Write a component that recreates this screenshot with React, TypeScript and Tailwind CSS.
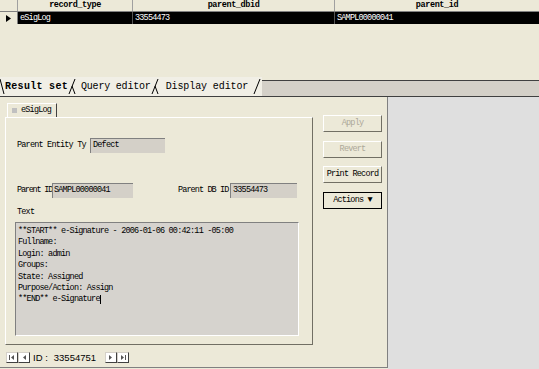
import React from 'react';

const body = "font-['Liberation_Mono',monospace] text-[8.5px] tracking-[-0.8px]";

function TabEdge({ last }: { last?: boolean }) {
  return (
    <svg width="9" height="15" viewBox="0 0 9 15" className="shrink-0">
      <line x1="1" y1="15" x2="7" y2="0" stroke="#000" strokeWidth="1" />
      {!last && <line x1="4" y1="7" x2="7" y2="15" stroke="#000" strokeWidth="1" />}
    </svg>
  );
}

function WinButton({ label, disabled, isDefault, mt }: { label: string; disabled?: boolean; isDefault?: boolean; mt: string }) {
  return (
    <div
      className={`${mt} h-[17px] w-[59px] flex items-center justify-center bg-[#ece9d8] border ${
        isDefault ? 'border-black' : 'border-t-white border-l-white border-r-[#716f64] border-b-[#716f64]'
      } ${disabled ? 'text-[#aca899]' : 'text-black'} ${body}`}
    >
      {label}
    </div>
  );
}

function NavBtn({ dir, end }: { dir: 'l' | 'r'; end?: boolean }) {
  return (
    <div className="w-[12px] h-[11px] bg-white border-r border-b border-r-[#404040] border-b-[#404040] border-t border-l border-t-[#d4d0c8] border-l-[#d4d0c8] flex items-center justify-center">
      <svg width="8" height="7" viewBox="0 0 8 7">
        {dir === 'l' ? (
          <>
            {end && <rect x="1" y="1" width="1" height="5" fill="#555" />}
            <polygon points="6,1 6,6 3,3.5" fill="#555" />
          </>
        ) : (
          <>
            <polygon points="2,1 2,6 5,3.5" fill="#555" />
            {end && <rect x="6" y="1" width="1" height="5" fill="#555" />}
          </>
        )}
      </svg>
    </div>
  );
}

export default function App() {
  const lines = [
    '**START** e-Signature - 2006-01-06 00:42:11 -05:00',
    'Fullname:',
    'Login: admin',
    'Groups:',
    'State: Assigned',
    'Purpose/Action: Assign',
  ];

  return (
    <div className="w-[539px] h-[369px] overflow-hidden bg-[#ece9d8] text-black">
      {/* result grid */}
      <div className={`grid grid-cols-[18px_115px_202px_204px] h-[12px] border-b border-[#808080] font-bold leading-[11px] font-['Liberation_Mono',monospace] text-[8.5px] tracking-[-0.4px]`}>
        <div className="border-r border-[#a0a0a0]" />
        <div className="text-center border-r border-[#a0a0a0]">record_type</div>
        <div className="text-center border-r border-[#a0a0a0]">parent_dbid</div>
        <div className="text-center">parent_id</div>
      </div>
      <div className={`grid grid-cols-[18px_115px_202px_204px] h-[12px] bg-black text-white leading-[12px] ${body}`}>
        <div className="bg-[#ece9d8] border-r border-[#808080] flex items-center pl-[6px]">
          <svg width="5" height="7" viewBox="0 0 5 7">
            <polygon points="0,0 5,3.5 0,7" fill="#000" />
          </svg>
        </div>
        <div className="pl-[2px] border-r border-[#555]">eSigLog</div>
        <div className="pl-[2px] border-r border-[#555]">33554473</div>
        <div className="pl-[2px]">SAMPL00000041</div>
      </div>

      <div className="h-[53px]" />

      {/* editor tabs */}
      <div className="flex h-[19px] font-['Liberation_Mono',monospace] text-[10px] leading-[15px]">
        <div className="flex items-start pt-[2px] bg-[#f1efe6]">
          <svg width="5" height="15" viewBox="0 0 5 15" className="shrink-0">
            <line x1="0" y1="0" x2="4" y2="15" stroke="#000" strokeWidth="1" />
          </svg>
          <span className="font-bold tracking-[0.3px]">Result set</span>
          <TabEdge />
          <span className="ml-[4px] tracking-[-0.2px]">Query editor</span>
          <TabEdge />
          <span className="ml-[6px] tracking-[-0.1px]">Display editor</span>
          <span className="w-[5px]" />
          <TabEdge last />
        </div>
        <div className="flex-1 mt-[3px] border-t border-[#404040] bg-[#d4d0c8]" />
      </div>
      <div className="h-px bg-[#404040]" />

      {/* main area */}
      <div className="flex h-[272px]">
        <div className="w-[388px] h-[271px] border-r border-b border-[#808080] flex pl-[5px] bg-[#ece9d8]">
          <div className="w-[308px] flex flex-col">
            <div className={`mt-[6px] ml-[2px] h-[14px] w-[50px] flex items-center gap-[4px] pl-[4px] border-t border-l border-white border-r border-r-[#404040] ${body}`}>
              <span className="w-[5px] h-[5px] bg-[#c0c0c0]" />
              <span>eSigLog</span>
            </div>
            <div className={`h-[228px] border border-t-white border-l-white border-r-[#716f64] border-b-[#716f64] pl-[11px] pt-[20px] ${body}`}>
              <div className="flex items-center h-[15px]">
                <div className="w-[73px] whitespace-nowrap">Parent Entity Ty</div>
                <div className="w-[75px] h-[15px] bg-[#d4d0c8] border-t border-l border-[#808080] pl-[2px] leading-[13px]">Defect</div>
              </div>
              <div className="flex items-center h-[15px] mt-[30px]">
                <div className="w-[35px] whitespace-nowrap tracking-[-1.2px]">Parent ID</div>
                <div className="w-[81px] h-[15px] bg-[#d4d0c8] border-t border-l border-[#808080] pl-[1px] leading-[13px]">SAMPL00000041</div>
                <div className="ml-[45px] w-[52px] whitespace-nowrap tracking-[-0.9px]">Parent DB ID</div>
                <div className="w-[67px] h-[15px] bg-[#d4d0c8] border-t border-l border-[#808080] pl-[2px] leading-[13px]">33554473</div>
              </div>
              <div className="mt-[9px] h-[10px] leading-[10px]">Text</div>
              <div className="mt-[5px] ml-[-2px] w-[284px] h-[114px] bg-[#d6d3ce] border-t border-l border-[#808080] border-r border-b border-r-white border-b-white pl-[2px] pt-[3px] leading-[11.4px]">
                {lines.map((l) => (
                  <div key={l} className="whitespace-pre">{l}</div>
                ))}
                <div className="whitespace-pre">
                  **END** e-Signature<span className="inline-block w-px h-[9px] bg-black align-middle" />
                </div>
              </div>
            </div>
            <div className="mt-[7px] ml-[1px] h-[11px] flex items-center">
              <NavBtn dir="l" end />
              <NavBtn dir="l" />
              <div className="w-[75px] h-[11px] flex items-center font-['Liberation_Sans',sans-serif] text-[9.5px] leading-[11px]">
                <span className="ml-[3px]">ID :</span>
                <span className="ml-[6px]">33554751</span>
              </div>
              <NavBtn dir="r" />
              <NavBtn dir="r" end />
            </div>
          </div>
          <div className="ml-[10px] flex flex-col">
            <WinButton label="Apply" disabled mt="mt-[18px]" />
            <WinButton label="Revert" disabled mt="mt-[9px]" />
            <WinButton label="Print Record" mt="mt-[8px]" />
            <WinButton label="Actions ▼" isDefault mt="mt-[9px]" />
          </div>
        </div>
        <div className="flex-1 bg-[#dfdfdf]" />
      </div>
    </div>
  );
}
